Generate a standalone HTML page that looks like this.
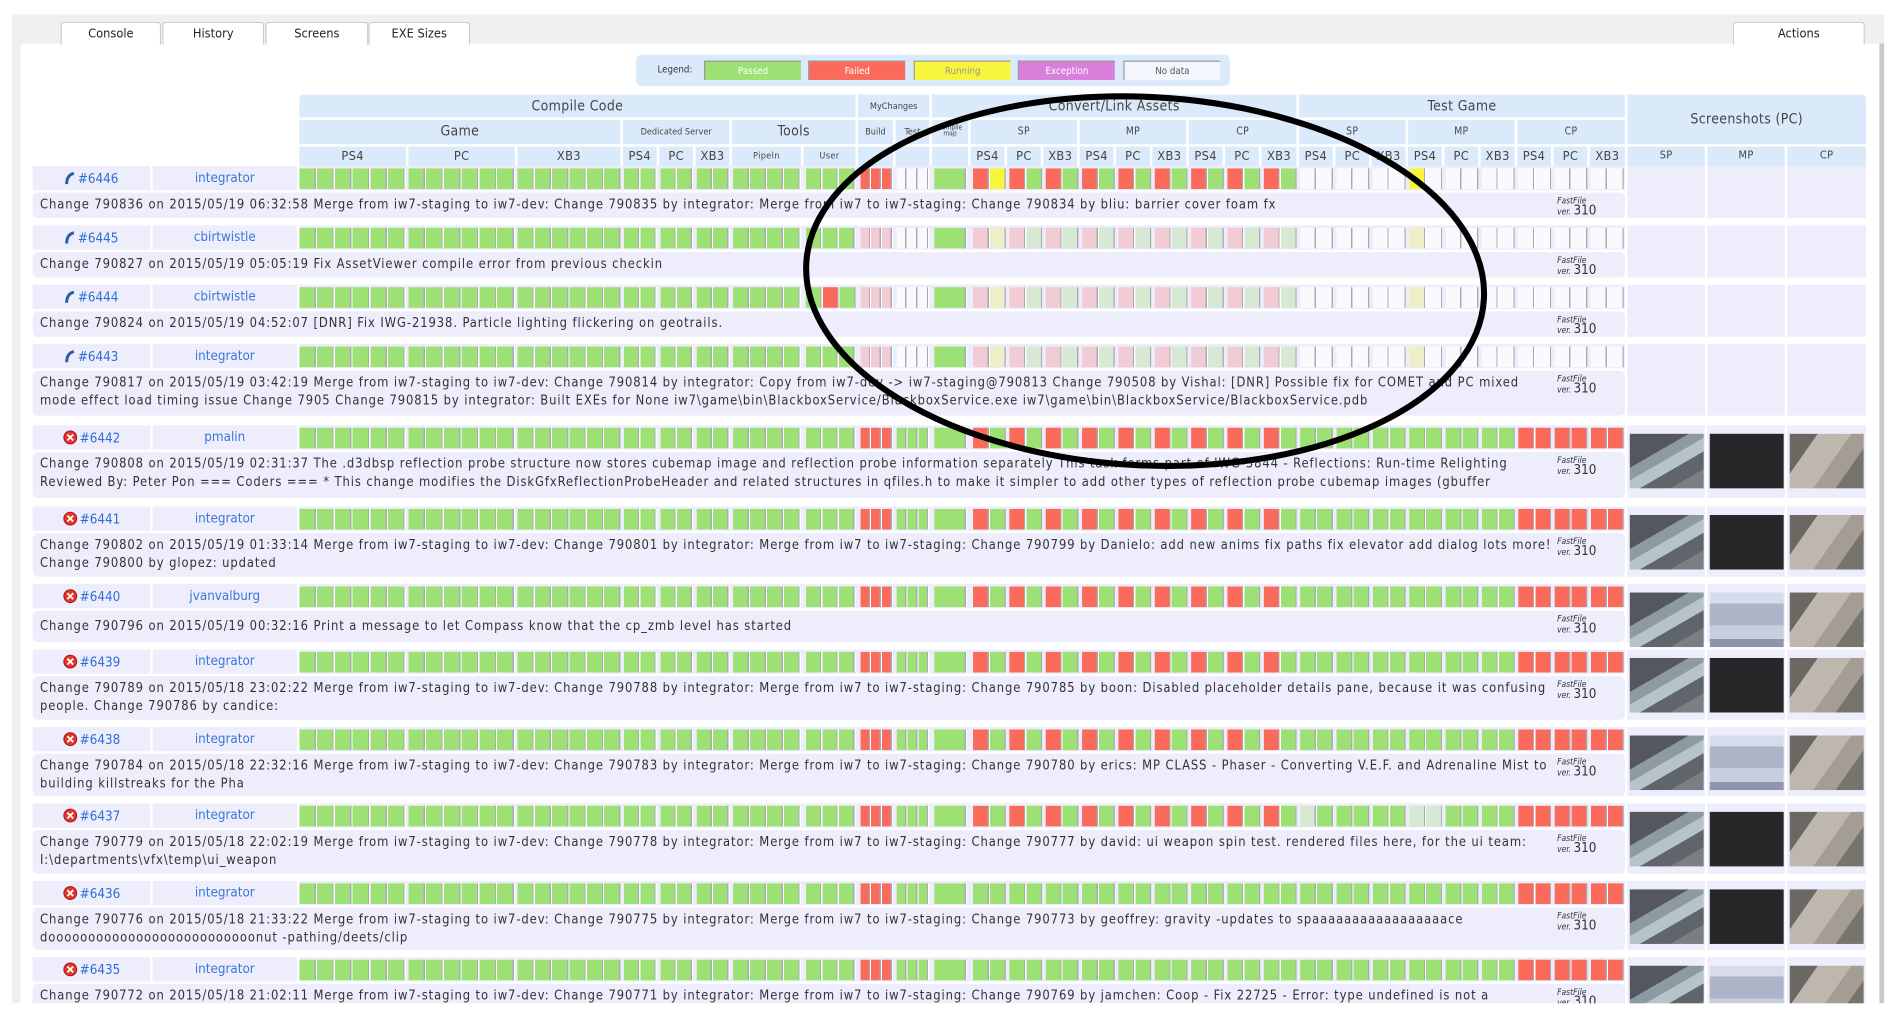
<!DOCTYPE html>
<html><head><meta charset="utf-8"><style>
html,body{margin:0;padding:0;width:1900px;height:1019px;overflow:hidden;background:#fff}
#w{position:relative;width:1568px;height:841px;transform:scale(1.211735);transform-origin:0 0;font-family:"DejaVu Sans Condensed","DejaVu Sans","Liberation Sans",sans-serif;font-stretch:condensed;color:#333}
.abs{position:absolute}
#gray{left:10px;top:12px;width:1545px;height:816px;background:#efefef}
#panel{left:17px;top:36px;width:1534px;height:792px;background:#fff}
.tab{position:absolute;top:18px;height:18px;background:#fff;border:1px solid #ccc;border-bottom:none;border-radius:3px 3px 0 0;font-size:10.5px;line-height:18px;text-align:center;color:#222}
#legend{left:525px;top:45px;width:490px;height:26px;background:#dbeafa;border-radius:5px}
.lg{position:absolute;top:50px;height:16px;font-size:8px;line-height:16px;text-align:center;color:#fff;border-top:1px solid #999;border-left:1px solid #999;box-sizing:border-box}
.h{position:absolute;background:#dbeafa;color:#444;display:flex;align-items:center;justify-content:center;font-size:10.5px;white-space:nowrap;overflow:hidden;text-align:center;line-height:1;letter-spacing:0.3px}
.b{position:absolute;left:0;width:1568px}
.id{position:absolute;left:27px;top:0;width:97px;height:20px;background:#ededfb;font-size:11px;color:#2d6ed4;display:flex;align-items:center;justify-content:center;gap:2px}
.u{position:absolute;left:126px;top:0;width:119px;height:20px;background:#ededfb;font-size:11px;color:#3a78d8;text-align:center;line-height:20px}
.s{position:absolute;left:0;top:0;height:20px;width:1342px}
.sb{position:absolute;left:247px;top:0;width:1094px;height:20px;background:#ededfb}
.s div{position:absolute;top:2px;height:17px;--c:#fafafe;--d:var(--c);background:repeating-linear-gradient(90deg,var(--c) 0 calc(var(--p) - 2px),#a9a9b4 calc(var(--p) - 2px) calc(var(--p) - 1px),#fff calc(var(--p) - 1px) var(--p))}
.s div:nth-child(n+12){background:linear-gradient(90deg,var(--c) 0 12px,#a9a9b4 12px 13px,#fff 13px 14px,var(--d) 14px 26px,#a9a9b4 26px 27px)}
.s div:nth-child(1){left:247px;width:88px;--p:14.667px}
.s div:nth-child(2){left:337px;width:88px;--p:14.667px}
.s div:nth-child(3){left:427px;width:86px;--p:14.333px}
.s div:nth-child(4){left:515px;width:27px;--p:13.5px}
.s div:nth-child(5){left:545px;width:27px;--p:13.5px}
.s div:nth-child(6){left:575px;width:27px;--p:13.5px}
.s div:nth-child(7){left:605px;width:56px;--p:14px}
.s div:nth-child(8){left:665px;width:41px;--p:13.667px}
.s div:nth-child(9){left:710px;width:27px;--p:9px}
.s div:nth-child(10){left:740px;width:27px;--p:9px}
.s div:nth-child(11){left:771px;width:27px;--p:27px}
.s div:nth-child(12){left:803px;width:27px}.s div:nth-child(13){left:833px;width:27px}.s div:nth-child(14){left:863px;width:27px}
.s div:nth-child(15){left:893px;width:27px}.s div:nth-child(16){left:923px;width:27px}.s div:nth-child(17){left:953px;width:27px}
.s div:nth-child(18){left:983px;width:27px}.s div:nth-child(19){left:1013px;width:27px}.s div:nth-child(20){left:1043px;width:27px}
.s div:nth-child(21){left:1073px;width:27px}.s div:nth-child(22){left:1103px;width:27px}.s div:nth-child(23){left:1133px;width:27px}
.s div:nth-child(24){left:1163px;width:27px}.s div:nth-child(25){left:1193px;width:27px}.s div:nth-child(26){left:1223px;width:27px}
.s div:nth-child(27){left:1253px;width:27px}.s div:nth-child(28){left:1283px;width:27px}.s div:nth-child(29){left:1313px;width:27px}
.s .g{--c:#9de174}.s .r{--c:#fb6b5b}.s .w{--c:#fafafe}
.s .rg{--c:#fb6b5b;--d:#9de174}.s .ry{--c:#fb6b5b;--d:#f8f63c}.s .yw{--c:#f8f63c;--d:#fafafe}
.s .pr{--c:#f2ccd5}.s .prg{--c:#f2ccd5;--d:#d7e9d3}.s .pry{--c:#f2ccd5;--d:#eeefc8}.s .pyw{--c:#eeefc8;--d:#fafafe}
.s .fg{--c:#d7e9d3;--d:#9de174}.s .ff{--c:#d7e9d3}
.s .grg{background:linear-gradient(90deg,#9de174 0 12px,#a9a9b4 12px 13px,#fff 13px 14px,#fb6b5b 14px 26px,#a9a9b4 26px 27px,#fff 27px 28px,#9de174 28px 40px,#a9a9b4 40px 41px)}
.d{position:absolute;left:27px;top:22px;width:1314px;background:#ededfb;border-radius:4px;font-size:10.6px;line-height:14.6px;padding-top:3px;box-sizing:border-box;white-space:nowrap;color:#333}
.d .t{position:absolute;left:6px;top:3px;letter-spacing:0.76px}
.ff2{position:absolute;left:1258px;top:3px;font-size:7px;font-style:italic;line-height:8px;color:#333}
.ff2 b{font-weight:normal;font-style:normal;font-size:11px}
.sc{position:absolute;top:0;width:64px;background:#ededfb}
.th{position:absolute;left:2px;top:7px;width:61px;height:45px}
.sp{background:linear-gradient(150deg,#54585e 0 35%,#8e9aa2 35% 48%,#b6c4ca 48% 62%,#5f656a 62% 80%,#7a7f84 80%)}
.mpd{background:#262729}
.mpl{background:linear-gradient(180deg,#d7dcea 0 20%,#aeb5c9 20% 60%,#c8cede 60% 85%,#8f96ab 85%)}
.cp{background:linear-gradient(125deg,#6b6864 0 25%,#bdb7ae 25% 55%,#a39d94 55% 75%,#77736d 75%)}
</style></head><body><div id="w">
<div id="gray" class="abs"></div>
<div id="panel" class="abs"></div>
<div class="abs" style="left:1551px;top:36px;width:4px;height:792px;background:#c8c8c8"></div>
<div class="tab" style="left:50px;width:81px">Console</div>
<div class="tab" style="left:134px;width:82px">History</div>
<div class="tab" style="left:219px;width:83px">Screens</div>
<div class="tab" style="left:304px;width:82px">EXE Sizes</div>
<div class="tab" style="left:1430px;width:107px">Actions</div>

<div id="legend" class="abs"></div>
<div class="abs" style="left:536px;top:50px;width:42px;height:16px;font-size:8px;line-height:16px;text-align:center;color:#333">Legend:</div>
<div class="lg" style="left:581px;width:80px;background:#9de174">Passed</div>
<div class="lg" style="left:667px;width:80px;background:#fb6b5b">Failed</div>
<div class="lg" style="left:754px;width:80px;background:#f8f63c;color:#999">Running</div>
<div class="lg" style="left:840px;width:80px;background:#d87edb">Exception</div>
<div class="lg" style="left:927px;width:80px;background:#f4f6fd;color:#555">No data</div>

<div class="h" style="left:247px;top:78px;width:459px;height:19px;font-size:11.5px;border-radius:4px 0 0 0">Compile Code</div>
<div class="h" style="left:708px;top:78px;width:59px;height:19px;font-size:7.5px;letter-spacing:0">MyChanges</div>
<div class="h" style="left:769px;top:78px;width:301px;height:19px;font-size:11.5px">Convert/Link Assets</div>
<div class="h" style="left:1072px;top:78px;width:269px;height:19px;font-size:11.5px">Test Game</div>
<div class="h" style="left:1343px;top:78px;width:197px;height:41px;font-size:11.5px;border-radius:0 4px 0 0">Screenshots (PC)</div>

<div class="h" style="left:247px;top:99px;width:265px;height:20px;font-size:11.5px">Game</div>
<div class="h" style="left:514px;top:99px;width:88px;height:20px;font-size:7.5px;letter-spacing:0">Dedicated Server</div>
<div class="h" style="left:604px;top:99px;width:102px;height:20px;font-size:11.5px">Tools</div>
<div class="h" style="left:708px;top:99px;width:29px;height:20px;font-size:7.5px;letter-spacing:0">Build</div>
<div class="h" style="left:739px;top:99px;width:28px;height:20px;font-size:7.5px;letter-spacing:0">Test</div>
<div class="h" style="left:769px;top:99px;width:30px;height:20px;font-size:5.5px;white-space:normal;letter-spacing:0">Compile map</div>
<div class="h" style="left:801px;top:99px;width:88px;height:20px;font-size:8.5px">SP</div>
<div class="h" style="left:891px;top:99px;width:88px;height:20px;font-size:8.5px">MP</div>
<div class="h" style="left:981px;top:99px;width:89px;height:20px;font-size:8.5px">CP</div>
<div class="h" style="left:1072px;top:99px;width:88px;height:20px;font-size:8.5px">SP</div>
<div class="h" style="left:1162px;top:99px;width:88px;height:20px;font-size:8.5px">MP</div>
<div class="h" style="left:1252px;top:99px;width:89px;height:20px;font-size:8.5px">CP</div>

<div class="h" style="left:247px;top:121px;width:88px;height:16px">PS4</div>
<div class="h" style="left:337px;top:121px;width:88px;height:16px">PC</div>
<div class="h" style="left:427px;top:121px;width:85px;height:16px">XB3</div>
<div class="h" style="left:514px;top:121px;width:28px;height:16px">PS4</div>
<div class="h" style="left:544px;top:121px;width:28px;height:16px">PC</div>
<div class="h" style="left:574px;top:121px;width:28px;height:16px">XB3</div>
<div class="h" style="left:604px;top:121px;width:57px;height:16px;font-size:7.5px">Pipeln</div>
<div class="h" style="left:663px;top:121px;width:43px;height:16px;font-size:7.5px">User</div>
<div class="h" style="left:708px;top:121px;width:29px;height:16px"></div>
<div class="h" style="left:739px;top:121px;width:28px;height:16px"></div>
<div class="h" style="left:769px;top:121px;width:30px;height:16px"></div>
<div class="h" style="left:801px;top:121px;width:28px;height:16px">PS4</div>
<div class="h" style="left:831px;top:121px;width:28px;height:16px">PC</div>
<div class="h" style="left:861px;top:121px;width:28px;height:16px">XB3</div>
<div class="h" style="left:891px;top:121px;width:28px;height:16px">PS4</div>
<div class="h" style="left:921px;top:121px;width:28px;height:16px">PC</div>
<div class="h" style="left:951px;top:121px;width:28px;height:16px">XB3</div>
<div class="h" style="left:981px;top:121px;width:28px;height:16px">PS4</div>
<div class="h" style="left:1011px;top:121px;width:28px;height:16px">PC</div>
<div class="h" style="left:1041px;top:121px;width:29px;height:16px">XB3</div>
<div class="h" style="left:1072px;top:121px;width:28px;height:16px">PS4</div>
<div class="h" style="left:1102px;top:121px;width:28px;height:16px">PC</div>
<div class="h" style="left:1132px;top:121px;width:28px;height:16px">XB3</div>
<div class="h" style="left:1162px;top:121px;width:28px;height:16px">PS4</div>
<div class="h" style="left:1192px;top:121px;width:28px;height:16px">PC</div>
<div class="h" style="left:1222px;top:121px;width:28px;height:16px">XB3</div>
<div class="h" style="left:1252px;top:121px;width:28px;height:16px">PS4</div>
<div class="h" style="left:1282px;top:121px;width:28px;height:16px">PC</div>
<div class="h" style="left:1312px;top:121px;width:29px;height:16px">XB3</div>
<div class="h" style="left:1343px;top:121px;width:64px;height:16px;font-size:9px">SP</div>
<div class="h" style="left:1409px;top:121px;width:64px;height:16px;font-size:9px">MP</div>
<div class="h" style="left:1475px;top:121px;width:65px;height:16px;font-size:9px">CP</div>

<div class="b" style="top:137px">
<div class="id"><svg width="9" height="11"><path d="M2 10 C2 5 4 2 8 1" stroke="#2a5fa8" stroke-width="2.4" fill="none"/></svg>#6446</div>
<div class="u">integrator</div>
<div class="sb"></div>
<div class="s"><div class="g"></div><div class="g"></div><div class="g"></div><div class="g"></div><div class="g"></div><div class="g"></div><div class="g"></div><div class="g"></div><div class="r"></div><div class="w"></div><div class="g"></div><div class="ry"></div><div class="rg"></div><div class="rg"></div><div class="rg"></div><div class="rg"></div><div class="rg"></div><div class="rg"></div><div class="rg"></div><div class="rg"></div><div class="w"></div><div class="w"></div><div class="w"></div><div class="yw"></div><div class="w"></div><div class="w"></div><div class="w"></div><div class="w"></div><div class="w"></div></div>
<div class="d" style="height:21px"><span class="t">Change 790836 on 2015/05/19 06:32:58 Merge from iw7-staging to iw7-dev: Change 790835 by integrator: Merge from iw7 to iw7-staging: Change 790834 by bliu: barrier cover foam fx</span><div class="ff2">FastFile<br>ver. <b>310</b></div></div>
<div class="sc" style="left:1343px;height:43px"></div><div class="sc" style="left:1409px;height:43px"></div><div class="sc" style="left:1475px;height:43px;width:65px"></div>
</div>

<div class="b" style="top:186px">
<div class="id"><svg width="9" height="11"><path d="M2 10 C2 5 4 2 8 1" stroke="#2a5fa8" stroke-width="2.4" fill="none"/></svg>#6445</div>
<div class="u">cbirtwistle</div>
<div class="sb"></div>
<div class="s"><div class="g"></div><div class="g"></div><div class="g"></div><div class="g"></div><div class="g"></div><div class="g"></div><div class="g"></div><div class="g"></div><div class="pr"></div><div class="w"></div><div class="g"></div><div class="pry"></div><div class="prg"></div><div class="prg"></div><div class="prg"></div><div class="prg"></div><div class="prg"></div><div class="prg"></div><div class="prg"></div><div class="prg"></div><div class="w"></div><div class="w"></div><div class="w"></div><div class="pyw"></div><div class="w"></div><div class="w"></div><div class="w"></div><div class="w"></div><div class="w"></div></div>
<div class="d" style="height:21px"><span class="t">Change 790827 on 2015/05/19 05:05:19 Fix AssetViewer compile error from previous checkin</span><div class="ff2">FastFile<br>ver. <b>310</b></div></div>
<div class="sc" style="left:1343px;height:43px"></div><div class="sc" style="left:1409px;height:43px"></div><div class="sc" style="left:1475px;height:43px;width:65px"></div>
</div>

<div class="b" style="top:235px">
<div class="id"><svg width="9" height="11"><path d="M2 10 C2 5 4 2 8 1" stroke="#2a5fa8" stroke-width="2.4" fill="none"/></svg>#6444</div>
<div class="u">cbirtwistle</div>
<div class="sb"></div>
<div class="s"><div class="g"></div><div class="g"></div><div class="g"></div><div class="g"></div><div class="g"></div><div class="g"></div><div class="g"></div><div class="grg"></div><div class="pr"></div><div class="w"></div><div class="g"></div><div class="pry"></div><div class="prg"></div><div class="prg"></div><div class="prg"></div><div class="prg"></div><div class="prg"></div><div class="prg"></div><div class="prg"></div><div class="prg"></div><div class="w"></div><div class="w"></div><div class="w"></div><div class="pyw"></div><div class="w"></div><div class="w"></div><div class="w"></div><div class="w"></div><div class="w"></div></div>
<div class="d" style="height:21px"><span class="t">Change 790824 on 2015/05/19 04:52:07 [DNR] Fix IWG-21938. Particle lighting flickering on geotrails.</span><div class="ff2">FastFile<br>ver. <b>310</b></div></div>
<div class="sc" style="left:1343px;height:43px"></div><div class="sc" style="left:1409px;height:43px"></div><div class="sc" style="left:1475px;height:43px;width:65px"></div>
</div>

<div class="b" style="top:284px">
<div class="id"><svg width="9" height="11"><path d="M2 10 C2 5 4 2 8 1" stroke="#2a5fa8" stroke-width="2.4" fill="none"/></svg>#6443</div>
<div class="u">integrator</div>
<div class="sb"></div>
<div class="s"><div class="g"></div><div class="g"></div><div class="g"></div><div class="g"></div><div class="g"></div><div class="g"></div><div class="g"></div><div class="g"></div><div class="pr"></div><div class="w"></div><div class="g"></div><div class="pry"></div><div class="prg"></div><div class="prg"></div><div class="prg"></div><div class="prg"></div><div class="prg"></div><div class="prg"></div><div class="prg"></div><div class="prg"></div><div class="w"></div><div class="w"></div><div class="w"></div><div class="pyw"></div><div class="w"></div><div class="w"></div><div class="w"></div><div class="w"></div><div class="w"></div></div>
<div class="d" style="height:37px"><span class="t">Change 790817 on 2015/05/19 03:42:19 Merge from iw7-staging to iw7-dev: Change 790814 by integrator: Copy from iw7-dev -&gt; iw7-staging@790813 Change 790508 by Vishal: [DNR] Possible fix for COMET and PC mixed<br>mode effect load timing issue Change 7905 Change 790815 by integrator: Built EXEs for None iw7\game\bin\BlackboxService/BlackboxService.exe iw7\game\bin\BlackboxService/BlackboxService.pdb</span><div class="ff2">FastFile<br>ver. <b>310</b></div></div>
<div class="sc" style="left:1343px;height:59px"></div><div class="sc" style="left:1409px;height:59px"></div><div class="sc" style="left:1475px;height:59px;width:65px"></div>
</div>

<div class="b" style="top:351px">
<div class="id"><svg width="12" height="12"><circle cx="6" cy="6" r="5.3" fill="#e2372a" stroke="#a11" stroke-width="0.8"/><path d="M3.6 3.6L8.4 8.4M8.4 3.6L3.6 8.4" stroke="#fff" stroke-width="1.5"/></svg>#6442</div>
<div class="u">pmalin</div>
<div class="sb"></div>
<div class="s"><div class="g"></div><div class="g"></div><div class="g"></div><div class="g"></div><div class="g"></div><div class="g"></div><div class="g"></div><div class="g"></div><div class="r"></div><div class="g"></div><div class="g"></div><div class="rg"></div><div class="rg"></div><div class="rg"></div><div class="rg"></div><div class="rg"></div><div class="rg"></div><div class="rg"></div><div class="rg"></div><div class="rg"></div><div class="g"></div><div class="g"></div><div class="g"></div><div class="g"></div><div class="g"></div><div class="g"></div><div class="r"></div><div class="r"></div><div class="r"></div></div>
<div class="d" style="height:38px"><span class="t">Change 790808 on 2015/05/19 02:31:37 The .d3dbsp reflection probe structure now stores cubemap image and reflection probe information separately This task forms part of IWG-3844 - Reflections: Run-time Relighting<br>Reviewed By: Peter Pon === Coders === * This change modifies the DiskGfxReflectionProbeHeader and related structures in qfiles.h to make it simpler to add other types of reflection probe cubemap images (gbuffer</span><div class="ff2">FastFile<br>ver. <b>310</b></div></div>
<div class="sc" style="left:1343px;height:60px"><div class="th sp"></div></div><div class="sc" style="left:1409px;height:60px"><div class="th mpd"></div></div><div class="sc" style="left:1475px;height:60px;width:65px"><div class="th cp"></div></div>
</div>

<div class="b" style="top:418px">
<div class="id"><svg width="12" height="12"><circle cx="6" cy="6" r="5.3" fill="#e2372a" stroke="#a11" stroke-width="0.8"/><path d="M3.6 3.6L8.4 8.4M8.4 3.6L3.6 8.4" stroke="#fff" stroke-width="1.5"/></svg>#6441</div>
<div class="u">integrator</div>
<div class="sb"></div>
<div class="s"><div class="g"></div><div class="g"></div><div class="g"></div><div class="g"></div><div class="g"></div><div class="g"></div><div class="g"></div><div class="g"></div><div class="r"></div><div class="g"></div><div class="g"></div><div class="rg"></div><div class="rg"></div><div class="rg"></div><div class="rg"></div><div class="rg"></div><div class="rg"></div><div class="rg"></div><div class="rg"></div><div class="rg"></div><div class="g"></div><div class="g"></div><div class="g"></div><div class="g"></div><div class="g"></div><div class="g"></div><div class="r"></div><div class="r"></div><div class="r"></div></div>
<div class="d" style="height:36px"><span class="t">Change 790802 on 2015/05/19 01:33:14 Merge from iw7-staging to iw7-dev: Change 790801 by integrator: Merge from iw7 to iw7-staging: Change 790799 by Danielo: add new anims fix paths fix elevator add dialog lots more!<br>Change 790800 by glopez: updated</span><div class="ff2">FastFile<br>ver. <b>310</b></div></div>
<div class="sc" style="left:1343px;height:58px"><div class="th sp"></div></div><div class="sc" style="left:1409px;height:58px"><div class="th mpd"></div></div><div class="sc" style="left:1475px;height:58px;width:65px"><div class="th cp"></div></div>
</div>

<div class="b" style="top:482px">
<div class="id"><svg width="12" height="12"><circle cx="6" cy="6" r="5.3" fill="#e2372a" stroke="#a11" stroke-width="0.8"/><path d="M3.6 3.6L8.4 8.4M8.4 3.6L3.6 8.4" stroke="#fff" stroke-width="1.5"/></svg>#6440</div>
<div class="u">jvanvalburg</div>
<div class="sb"></div>
<div class="s"><div class="g"></div><div class="g"></div><div class="g"></div><div class="g"></div><div class="g"></div><div class="g"></div><div class="g"></div><div class="g"></div><div class="r"></div><div class="g"></div><div class="g"></div><div class="rg"></div><div class="rg"></div><div class="rg"></div><div class="rg"></div><div class="rg"></div><div class="rg"></div><div class="rg"></div><div class="rg"></div><div class="rg"></div><div class="g"></div><div class="g"></div><div class="g"></div><div class="g"></div><div class="g"></div><div class="g"></div><div class="r"></div><div class="r"></div><div class="r"></div></div>
<div class="d" style="height:26px;"><span class="t" style="top:6px">Change 790796 on 2015/05/19 00:32:16 Print a message to let Compass know that the cp_zmb level has started</span><div class="ff2">FastFile<br>ver. <b>310</b></div></div>
<div class="sc" style="left:1343px;height:48px"><div class="th sp"></div></div><div class="sc" style="left:1409px;height:48px"><div class="th mpl"></div></div><div class="sc" style="left:1475px;height:48px;width:65px"><div class="th cp"></div></div>
</div>

<div class="b" style="top:536px">
<div class="id"><svg width="12" height="12"><circle cx="6" cy="6" r="5.3" fill="#e2372a" stroke="#a11" stroke-width="0.8"/><path d="M3.6 3.6L8.4 8.4M8.4 3.6L3.6 8.4" stroke="#fff" stroke-width="1.5"/></svg>#6439</div>
<div class="u">integrator</div>
<div class="sb"></div>
<div class="s"><div class="g"></div><div class="g"></div><div class="g"></div><div class="g"></div><div class="g"></div><div class="g"></div><div class="g"></div><div class="g"></div><div class="r"></div><div class="g"></div><div class="g"></div><div class="rg"></div><div class="rg"></div><div class="rg"></div><div class="rg"></div><div class="rg"></div><div class="rg"></div><div class="rg"></div><div class="rg"></div><div class="rg"></div><div class="g"></div><div class="g"></div><div class="g"></div><div class="g"></div><div class="g"></div><div class="g"></div><div class="r"></div><div class="r"></div><div class="r"></div></div>
<div class="d" style="height:36px"><span class="t">Change 790789 on 2015/05/18 23:02:22 Merge from iw7-staging to iw7-dev: Change 790788 by integrator: Merge from iw7 to iw7-staging: Change 790785 by boon: Disabled placeholder details pane, because it was confusing<br>people. Change 790786 by candice:</span><div class="ff2">FastFile<br>ver. <b>310</b></div></div>
<div class="sc" style="left:1343px;height:58px"><div class="th sp"></div></div><div class="sc" style="left:1409px;height:58px"><div class="th mpd"></div></div><div class="sc" style="left:1475px;height:58px;width:65px"><div class="th cp"></div></div>
</div>

<div class="b" style="top:600px">
<div class="id"><svg width="12" height="12"><circle cx="6" cy="6" r="5.3" fill="#e2372a" stroke="#a11" stroke-width="0.8"/><path d="M3.6 3.6L8.4 8.4M8.4 3.6L3.6 8.4" stroke="#fff" stroke-width="1.5"/></svg>#6438</div>
<div class="u">integrator</div>
<div class="sb"></div>
<div class="s"><div class="g"></div><div class="g"></div><div class="g"></div><div class="g"></div><div class="g"></div><div class="g"></div><div class="g"></div><div class="g"></div><div class="r"></div><div class="g"></div><div class="g"></div><div class="rg"></div><div class="rg"></div><div class="rg"></div><div class="rg"></div><div class="rg"></div><div class="rg"></div><div class="rg"></div><div class="rg"></div><div class="rg"></div><div class="g"></div><div class="g"></div><div class="g"></div><div class="g"></div><div class="g"></div><div class="g"></div><div class="r"></div><div class="r"></div><div class="r"></div></div>
<div class="d" style="height:35px"><span class="t">Change 790784 on 2015/05/18 22:32:16 Merge from iw7-staging to iw7-dev: Change 790783 by integrator: Merge from iw7 to iw7-staging: Change 790780 by erics: MP CLASS - Phaser - Converting V.E.F. and Adrenaline Mist to<br>building killstreaks for the Pha</span><div class="ff2">FastFile<br>ver. <b>310</b></div></div>
<div class="sc" style="left:1343px;height:57px"><div class="th sp"></div></div><div class="sc" style="left:1409px;height:57px"><div class="th mpl"></div></div><div class="sc" style="left:1475px;height:57px;width:65px"><div class="th cp"></div></div>
</div>

<div class="b" style="top:663px">
<div class="id"><svg width="12" height="12"><circle cx="6" cy="6" r="5.3" fill="#e2372a" stroke="#a11" stroke-width="0.8"/><path d="M3.6 3.6L8.4 8.4M8.4 3.6L3.6 8.4" stroke="#fff" stroke-width="1.5"/></svg>#6437</div>
<div class="u">integrator</div>
<div class="sb"></div>
<div class="s"><div class="g"></div><div class="g"></div><div class="g"></div><div class="g"></div><div class="g"></div><div class="g"></div><div class="g"></div><div class="g"></div><div class="r"></div><div class="g"></div><div class="g"></div><div class="rg"></div><div class="rg"></div><div class="rg"></div><div class="rg"></div><div class="rg"></div><div class="rg"></div><div class="rg"></div><div class="rg"></div><div class="rg"></div><div class="fg"></div><div class="g"></div><div class="g"></div><div class="ff"></div><div class="g"></div><div class="g"></div><div class="r"></div><div class="r"></div><div class="r"></div></div>
<div class="d" style="height:36px"><span class="t">Change 790779 on 2015/05/18 22:02:19 Merge from iw7-staging to iw7-dev: Change 790778 by integrator: Merge from iw7 to iw7-staging: Change 790777 by david: ui weapon spin test. rendered files here, for the ui team:<br>I:\departments\vfx\temp\ui_weapon</span><div class="ff2">FastFile<br>ver. <b>310</b></div></div>
<div class="sc" style="left:1343px;height:58px"><div class="th sp"></div></div><div class="sc" style="left:1409px;height:58px"><div class="th mpd"></div></div><div class="sc" style="left:1475px;height:58px;width:65px"><div class="th cp"></div></div>
</div>

<div class="b" style="top:727px">
<div class="id"><svg width="12" height="12"><circle cx="6" cy="6" r="5.3" fill="#e2372a" stroke="#a11" stroke-width="0.8"/><path d="M3.6 3.6L8.4 8.4M8.4 3.6L3.6 8.4" stroke="#fff" stroke-width="1.5"/></svg>#6436</div>
<div class="u">integrator</div>
<div class="sb"></div>
<div class="s"><div class="g"></div><div class="g"></div><div class="g"></div><div class="g"></div><div class="g"></div><div class="g"></div><div class="g"></div><div class="g"></div><div class="r"></div><div class="g"></div><div class="g"></div><div class="g"></div><div class="g"></div><div class="g"></div><div class="g"></div><div class="g"></div><div class="g"></div><div class="g"></div><div class="g"></div><div class="g"></div><div class="g"></div><div class="g"></div><div class="g"></div><div class="g"></div><div class="g"></div><div class="g"></div><div class="r"></div><div class="r"></div><div class="r"></div></div>
<div class="d" style="height:35px"><span class="t">Change 790776 on 2015/05/18 21:33:22 Merge from iw7-staging to iw7-dev: Change 790775 by integrator: Merge from iw7 to iw7-staging: Change 790773 by geoffrey: gravity -updates to spaaaaaaaaaaaaaaaaace<br>doooooooooooooooooooooooooonut -pathing/deets/clip</span><div class="ff2">FastFile<br>ver. <b>310</b></div></div>
<div class="sc" style="left:1343px;height:57px"><div class="th sp"></div></div><div class="sc" style="left:1409px;height:57px"><div class="th mpd"></div></div><div class="sc" style="left:1475px;height:57px;width:65px"><div class="th cp"></div></div>
</div>

<div class="b" style="top:790px">
<div class="id"><svg width="12" height="12"><circle cx="6" cy="6" r="5.3" fill="#e2372a" stroke="#a11" stroke-width="0.8"/><path d="M3.6 3.6L8.4 8.4M8.4 3.6L3.6 8.4" stroke="#fff" stroke-width="1.5"/></svg>#6435</div>
<div class="u">integrator</div>
<div class="sb"></div>
<div class="s"><div class="g"></div><div class="g"></div><div class="g"></div><div class="g"></div><div class="g"></div><div class="g"></div><div class="g"></div><div class="g"></div><div class="r"></div><div class="g"></div><div class="g"></div><div class="g"></div><div class="g"></div><div class="g"></div><div class="g"></div><div class="g"></div><div class="g"></div><div class="g"></div><div class="g"></div><div class="g"></div><div class="g"></div><div class="g"></div><div class="g"></div><div class="g"></div><div class="g"></div><div class="g"></div><div class="r"></div><div class="r"></div><div class="r"></div></div>
<div class="d" style="height:36px"><span class="t">Change 790772 on 2015/05/18 21:02:11 Merge from iw7-staging to iw7-dev: Change 790771 by integrator: Merge from iw7 to iw7-staging: Change 790769 by jamchen: Coop - Fix 22725 - Error: type undefined is not a</span><div class="ff2">FastFile<br>ver. <b>310</b></div></div>
<div class="sc" style="left:1343px;height:58px"><div class="th sp"></div></div><div class="sc" style="left:1409px;height:58px"><div class="th mpl"></div></div><div class="sc" style="left:1475px;height:58px;width:65px"><div class="th cp"></div></div>
</div>

<div class="abs" style="left:0;top:828px;width:1568px;height:13px;background:#fff"></div>
<div class="abs" style="left:1555px;top:0;width:13px;height:841px;background:#fff"></div>

<svg class="abs" style="left:0;top:0" width="1568" height="841"><ellipse cx="945" cy="232" rx="280" ry="152" transform="rotate(3 945 232)" fill="none" stroke="#000" stroke-width="5"/></svg>
</div></body></html>
